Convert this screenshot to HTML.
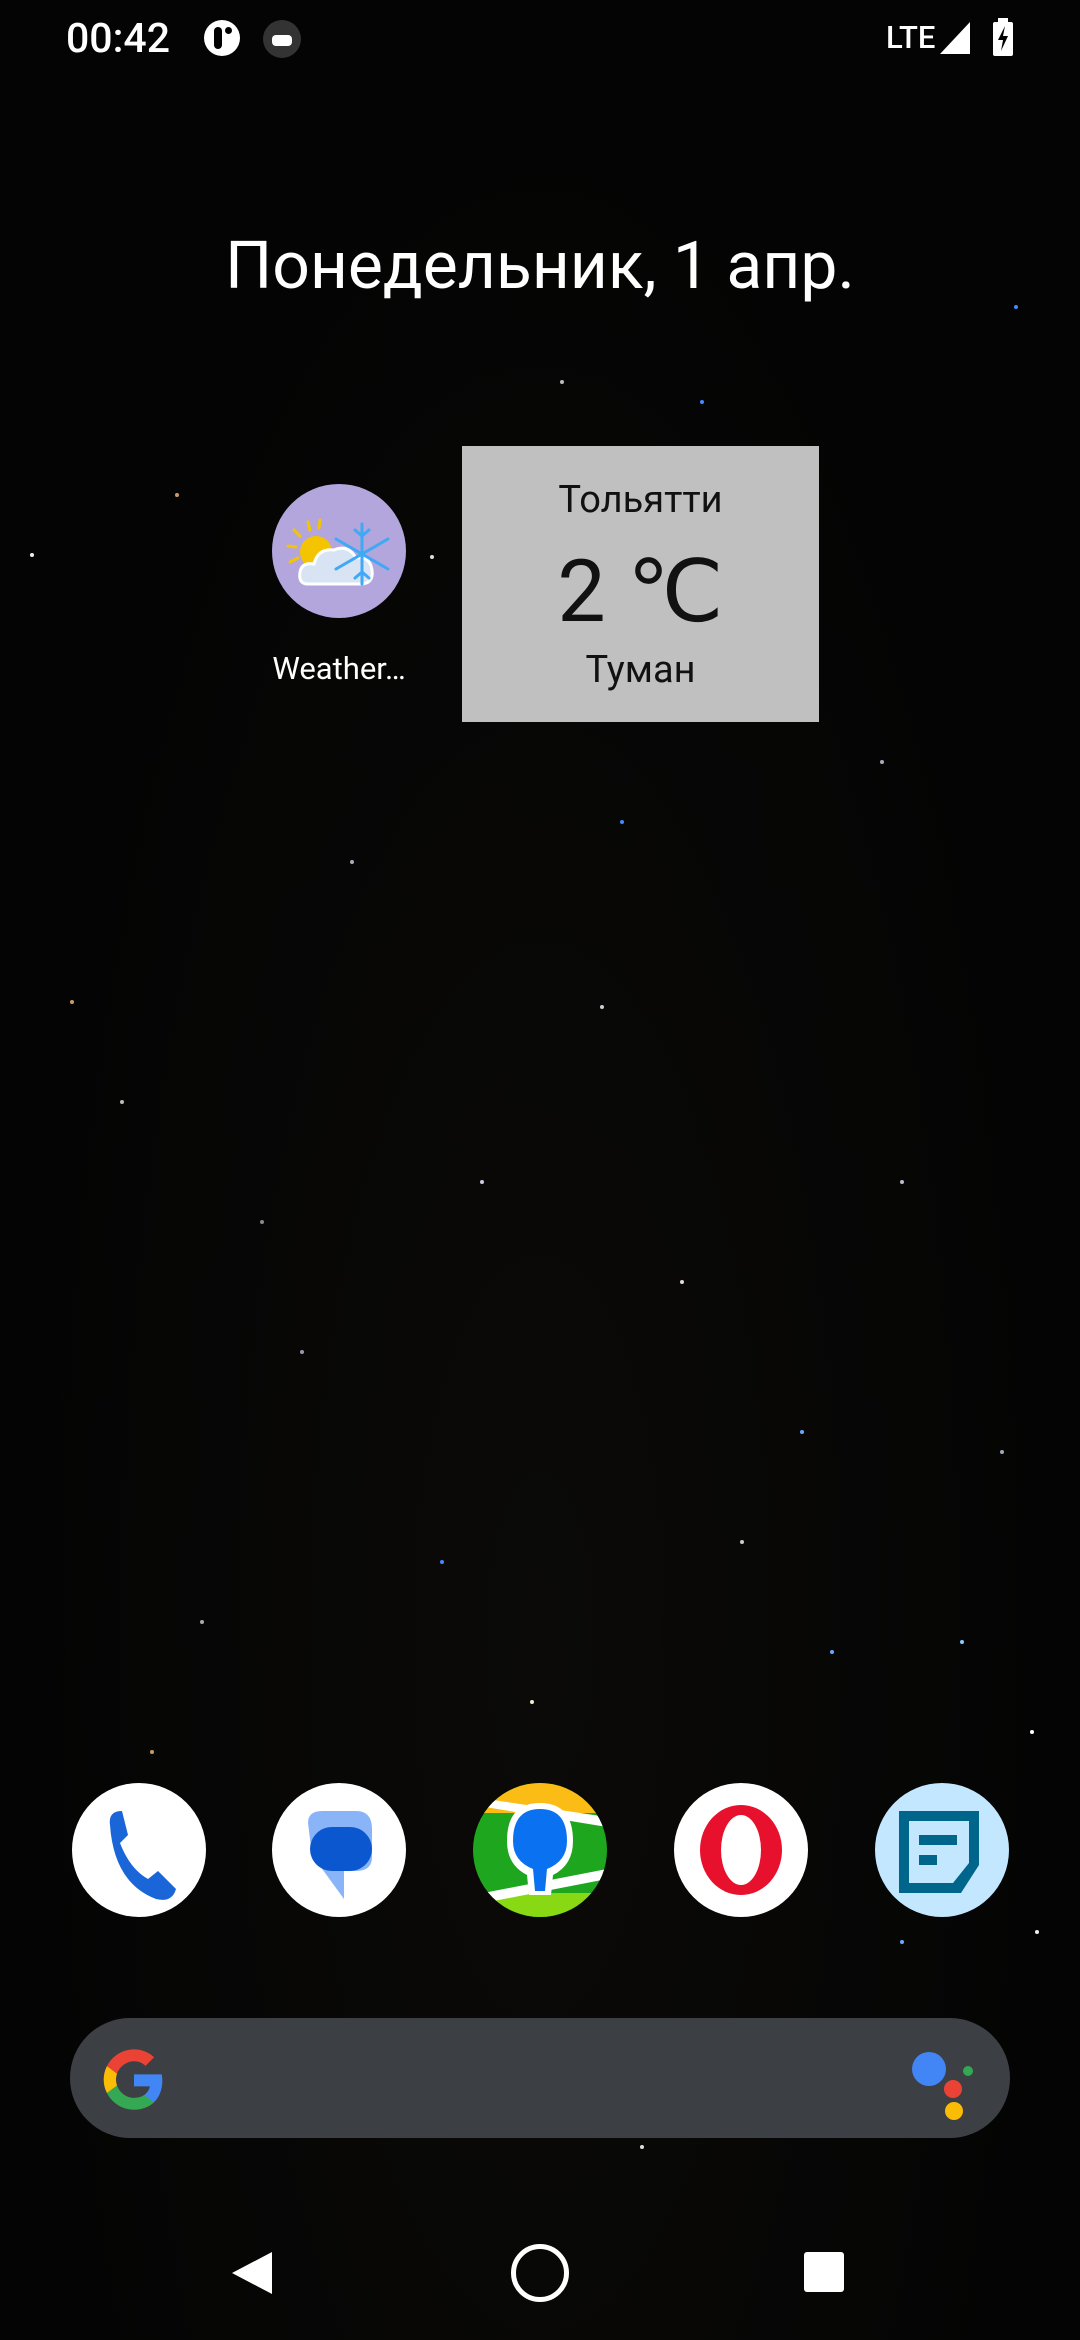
<!DOCTYPE html>
<html><head><meta charset="utf-8"><style>
html,body{margin:0;padding:0}
body{width:1080px;height:2340px;background:#050505;position:relative;overflow:hidden;font-family:"Roboto","Liberation Sans","DejaVu Sans",sans-serif;color:#fff}
.a{position:absolute}
.s{position:absolute;border-radius:50%;width:4px;height:4px;background:#9ab}
.ic{position:absolute;width:134px;height:134px;border-radius:50%;top:1783px}
</style></head><body>
<div class="a" style="left:0;top:0;width:1080px;height:2340px;background:radial-gradient(ellipse at 50% 70%,#0b0a08 0%,#040404 70%)"></div>
<div class="s" style="left:30px;top:553px;background:#eee"></div>
<div class="s" style="left:175px;top:493px;background:#c96"></div>
<div class="s" style="left:1014px;top:305px;background:#48f"></div>
<div class="s" style="left:797px;top:601px;background:#fff"></div>
<div class="s" style="left:600px;top:1005px;background:#ccd"></div>
<div class="s" style="left:880px;top:760px;background:#aab"></div>
<div class="s" style="left:120px;top:1100px;background:#bbb"></div>
<div class="s" style="left:440px;top:1560px;background:#48f"></div>
<div class="s" style="left:530px;top:1700px;background:#eec"></div>
<div class="s" style="left:800px;top:1430px;background:#6af"></div>
<div class="s" style="left:960px;top:1640px;background:#8cf"></div>
<div class="s" style="left:680px;top:1280px;background:#ddd"></div>
<div class="s" style="left:300px;top:1350px;background:#99a"></div>
<div class="s" style="left:70px;top:1000px;background:#c96"></div>
<div class="s" style="left:1030px;top:1730px;background:#fff"></div>
<div class="s" style="left:350px;top:860px;background:#aab"></div>
<div class="s" style="left:620px;top:820px;background:#48f"></div>
<div class="s" style="left:740px;top:1540px;background:#ccc"></div>
<div class="s" style="left:200px;top:1620px;background:#aaa"></div>
<div class="s" style="left:900px;top:1180px;background:#bbc"></div>
<div class="s" style="left:480px;top:1180px;background:#ccd"></div>
<div class="s" style="left:1000px;top:1450px;background:#9ab"></div>
<div class="s" style="left:260px;top:1220px;background:#888"></div>
<div class="s" style="left:830px;top:1650px;background:#6af"></div>
<div class="s" style="left:560px;top:380px;background:#bbb"></div>
<div class="s" style="left:430px;top:555px;background:#ddd"></div>
<div class="s" style="left:150px;top:1750px;background:#c96"></div>
<div class="s" style="left:1035px;top:1930px;background:#eee"></div>
<div class="s" style="left:640px;top:2145px;background:#ddd"></div>
<div class="s" style="left:700px;top:400px;background:#48f"></div>
<div class="s" style="left:900px;top:1940px;background:#6af"></div>
<!-- status bar -->
<div class="a" style="left:66px;top:15px;font-size:41px;font-weight:500">00:42</div>
<div class="a" style="left:204px;top:20px;width:36px;height:36px;border-radius:50%;background:#fff"><div class="a" style="left:10px;top:7px;width:8px;height:22px;background:#000;border-radius:4px"></div><div class="a" style="left:21px;top:7px;width:7px;height:7px;background:#000;border-radius:50%"></div></div>
<div class="a" style="left:263px;top:20px;width:38px;height:38px;border-radius:50%;background:#333"><div class="a" style="left:9px;top:15px;width:20px;height:11px;background:#fff;border-radius:4px"></div></div>
<div class="a" style="left:886px;top:19px;font-size:31px;font-weight:500">LTE</div>
<svg class="a" style="left:938px;top:20px" width="34" height="36"><polygon points="32,2 32,34 2,34" fill="#fff"/></svg>
<svg class="a" style="left:992px;top:18px" width="22" height="40"><rect x="6" y="0" width="10" height="4" fill="#fff"/><rect x="1" y="4" width="20" height="34" rx="2" fill="#fff"/><polygon points="13,8 6,22 11,22 9,33 16,18 11,18" fill="#000"/></svg>
<!-- date -->
<div class="a" style="left:0;width:1080px;top:228px;text-align:center;font-size:66px">Понедельник, 1 апр.</div>
<!-- weather app icon -->
<div class="a" style="left:272px;top:484px;width:134px;height:134px;border-radius:50%;background:#b3a6dc"></div>
<svg class="a" style="left:272px;top:484px" width="134" height="134" viewBox="0 0 134 134">
<g stroke="#f5c400" stroke-width="3" stroke-linecap="round"><line x1="36" y1="38" x2="38" y2="46"/><line x1="22" y1="46" x2="28" y2="52"/><line x1="16" y1="62" x2="24" y2="63"/><line x1="18" y1="78" x2="26" y2="74"/><line x1="48" y1="36" x2="47" y2="44"/></g>
<circle cx="44" cy="68" r="16" fill="#f5c400"/>
<path d="M36 100 Q26 100 28 88 Q30 78 42 80 Q46 64 62 66 Q76 60 84 74 Q98 72 100 86 Q102 100 88 100 Z" fill="#d8e4f4" stroke="#fff" stroke-width="3"/>
<g stroke="#3fa9f5" stroke-width="3" stroke-linecap="round" fill="none"><line x1="90" y1="40" x2="90" y2="100"/><line x1="64" y1="55" x2="116" y2="85"/><line x1="64" y1="85" x2="116" y2="55"/><path d="M83 46 L90 52 L97 46 M83 94 L90 88 L97 94"/></g>
</svg>
<div class="a" style="left:258px;width:162px;top:650px;text-align:center;font-size:31px">Weather…</div>
<!-- widget -->
<div class="a" style="left:462px;top:446px;width:357px;height:276px;background:#c0c0c0;color:#111;text-align:center">
<div class="a" style="left:0;width:357px;top:32px;font-size:38px">Тольятти</div>
<div class="a" style="left:0;width:357px;top:96px;font-size:86px;line-height:100px">2 ℃</div>
<div class="a" style="left:0;width:357px;top:202px;font-size:38px">Туман</div>
</div>
<!-- dock -->
<div class="ic" style="left:72px;background:#fff"><svg width="134" height="134"><path d="M38 42 Q36 28 50 28 L56 52 L48 60 Q58 86 76 96 L86 88 L104 106 Q100 120 84 116 Q42 100 38 42Z" fill="#1a66d9"/></svg></div>
<div class="ic" style="left:272px;background:#fff"><svg width="134" height="134"><path d="M36 40 Q36 28 50 28 L84 28 Q100 28 100 46 L100 74 Q100 88 84 88 L72 88 L72 116 L40 72 Z" fill="#8ab4f8"/><rect x="38" y="44" width="62" height="44" rx="22" fill="#0b57d0"/></svg></div>
<div class="ic" style="left:473px;background:#1ea71e;overflow:hidden"><svg width="134" height="134"><rect x="0" y="0" width="134" height="30" fill="#fbbc15"/><polygon points="0,22 134,44 134,34 0,14" fill="#fff"/><rect x="0" y="110" width="134" height="30" fill="#88d814"/><polygon points="0,112 134,86 134,96 0,122" fill="#fff"/><path d="M67 20 Q100 20 100 58 Q100 82 80 92 L78 112 L56 112 L54 92 Q34 82 34 58 Q34 20 67 20Z" fill="#fff"/><path d="M67 26 Q94 26 94 58 Q94 78 74 86 L72 108 L62 108 L60 86 Q40 78 40 58 Q40 26 67 26Z" fill="#0a72f0"/></svg></div>
<div class="ic" style="left:674px;background:#fff"><svg width="134" height="134"><ellipse cx="67" cy="67" rx="41" ry="45" fill="#e8112d"/><ellipse cx="67" cy="67" rx="20" ry="35" fill="#fff"/></svg></div>
<div class="ic" style="left:875px;background:#c2e7ff"><svg width="134" height="134"><path d="M24 28 L104 28 L104 82 L86 110 L24 110Z" fill="#00658a"/><path d="M34 38 L94 38 L94 80 L78 100 L34 100Z" fill="#c2e7ff"/><rect x="44" y="52" width="38" height="10" fill="#00658a"/><rect x="44" y="72" width="18" height="10" fill="#00658a"/></svg></div>
<!-- search bar -->
<div class="a" style="left:70px;top:2018px;width:940px;height:120px;border-radius:60px;background:#3c3f43"></div>
<svg class="a" style="left:100px;top:2046px" width="68" height="68" viewBox="0 0 48 48"><path d="M44 24.5c0-1.5-.1-3-.4-4.5H24v8.5h11.2c-.5 2.6-2 4.8-4.3 6.3v5.2h6.9c4-3.7 6.2-9.1 6.2-15.5z" fill="#4285f4"/><path d="M24 45c5.8 0 10.6-1.9 14.1-5.2l-6.9-5.2c-1.9 1.3-4.3 2-7.2 2-5.6 0-10.3-3.8-12-8.8H4.9v5.4C8.4 40.2 15.7 45 24 45z" fill="#34a853"/><path d="M12 27.8c-.4-1.3-.7-2.7-.7-4.1s.3-2.8.7-4.1v-5.4H4.9C3.4 17.1 2.6 20.3 2.6 23.7s.8 6.6 2.3 9.5z" fill="#fbbc05"/><path d="M24 10.8c3.1 0 5.9 1.1 8.1 3.2l6.1-6.1C34.5 4.5 29.7 2.4 24 2.4 15.7 2.4 8.4 7.2 4.9 14.2l7.1 5.4c1.7-5 6.4-8.8 12-8.8z" fill="#ea4335"/></svg>
<div class="a" style="left:912px;top:2052px;width:34px;height:34px;border-radius:50%;background:#4285f4"></div>
<div class="a" style="left:944px;top:2080px;width:18px;height:18px;border-radius:50%;background:#ea4335"></div>
<div class="a" style="left:945px;top:2102px;width:18px;height:18px;border-radius:50%;background:#fbbc05"></div>
<div class="a" style="left:963px;top:2066px;width:10px;height:10px;border-radius:50%;background:#34a853"></div>
<!-- nav bar -->
<svg class="a" style="left:230px;top:2250px" width="44" height="46"><polygon points="42,2 42,44 2,23" fill="#fff"/></svg>
<div class="a" style="left:511px;top:2244px;width:48px;height:48px;border-radius:50%;border:5px solid #fff"></div>
<div class="a" style="left:804px;top:2252px;width:40px;height:40px;background:#fff;border-radius:3px"></div>
</body></html>
